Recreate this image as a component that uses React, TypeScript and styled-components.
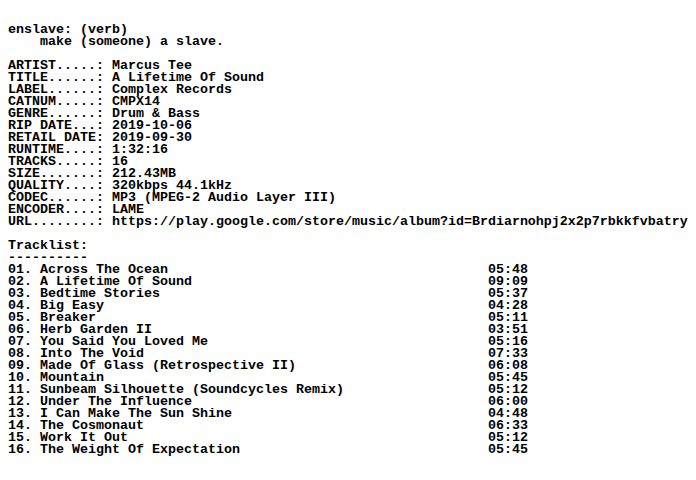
import React from "react";
import styled, { createGlobalStyle } from "styled-components";

const Global = createGlobalStyle`
  html, body { margin: 0; padding: 0; background: #ffffff; }
  body { overflow: hidden; }
`;

const Screen = styled.div`
  padding: 24px 0 0 8px;
  font-family: "Liberation Mono", "DejaVu Sans Mono", monospace;
  font-weight: 700;
  font-size: 13.333px;
  line-height: 12px;
  color: #000000;
  white-space: pre;
  width: 696px;
  height: 456px;
  box-sizing: border-box;
`;

const Line = styled.div<{ $indent?: number }>`
  height: 12px;
  padding-left: ${(p) => (p.$indent ?? 0)}ch;
`;

const Blank = styled.div`
  height: 12px;
`;

const InfoRow = styled.div`
  display: grid;
  grid-template-columns: 13ch auto;
  height: 12px;
`;

const TrackRow = styled.div`
  display: grid;
  grid-template-columns: 60ch auto;
  height: 12px;
`;

const info: [string, string][] = [
  ["ARTIST.....:", "Marcus Tee"],
  ["TITLE......:", "A Lifetime Of Sound"],
  ["LABEL......:", "Complex Records"],
  ["CATNUM.....:", "CMPX14"],
  ["GENRE......:", "Drum & Bass"],
  ["RIP DATE...:", "2019-10-06"],
  ["RETAIL DATE:", "2019-09-30"],
  ["RUNTIME....:", "1:32:16"],
  ["TRACKS.....:", "16"],
  ["SIZE.......:", "212.43MB"],
  ["QUALITY....:", "320kbps 44.1kHz"],
  ["CODEC......:", "MP3 (MPEG-2 Audio Layer III)"],
  ["ENCODER....:", "LAME"],
  ["URL........:", "https://play.google.com/store/music/album?id=Brdiarnohpj2x2p7rbkkfvbatry"],
];

const tracks: [string, string][] = [
  ["Across The Ocean", "05:48"],
  ["A Lifetime Of Sound", "09:09"],
  ["Bedtime Stories", "05:37"],
  ["Big Easy", "04:28"],
  ["Breaker", "05:11"],
  ["Herb Garden II", "03:51"],
  ["You Said You Loved Me", "05:16"],
  ["Into The Void", "07:33"],
  ["Made Of Glass (Retrospective II)", "06:08"],
  ["Mountain", "05:45"],
  ["Sunbeam Silhouette (Soundcycles Remix)", "05:12"],
  ["Under The Influence", "06:00"],
  ["I Can Make The Sun Shine", "04:48"],
  ["The Cosmonaut", "06:33"],
  ["Work It Out", "05:12"],
  ["The Weight Of Expectation", "05:45"],
];

export default function App() {
  return (
    <>
      <Global />
      <Screen>
        <Line>enslave: (verb)</Line>
        <Line $indent={4}>make (someone) a slave.</Line>
        <Blank />
        {info.map(([k, v]) => (
          <InfoRow key={k}>
            <span>{k}</span>
            <span>{v}</span>
          </InfoRow>
        ))}
        <Blank />
        <Line>Tracklist:</Line>
        <Line>----------</Line>
        {tracks.map(([name, time], i) => (
          <TrackRow key={name}>
            <span>{`${String(i + 1).padStart(2, "0")}. ${name}`}</span>
            <span>{time}</span>
          </TrackRow>
        ))}
      </Screen>
    </>
  );
}
